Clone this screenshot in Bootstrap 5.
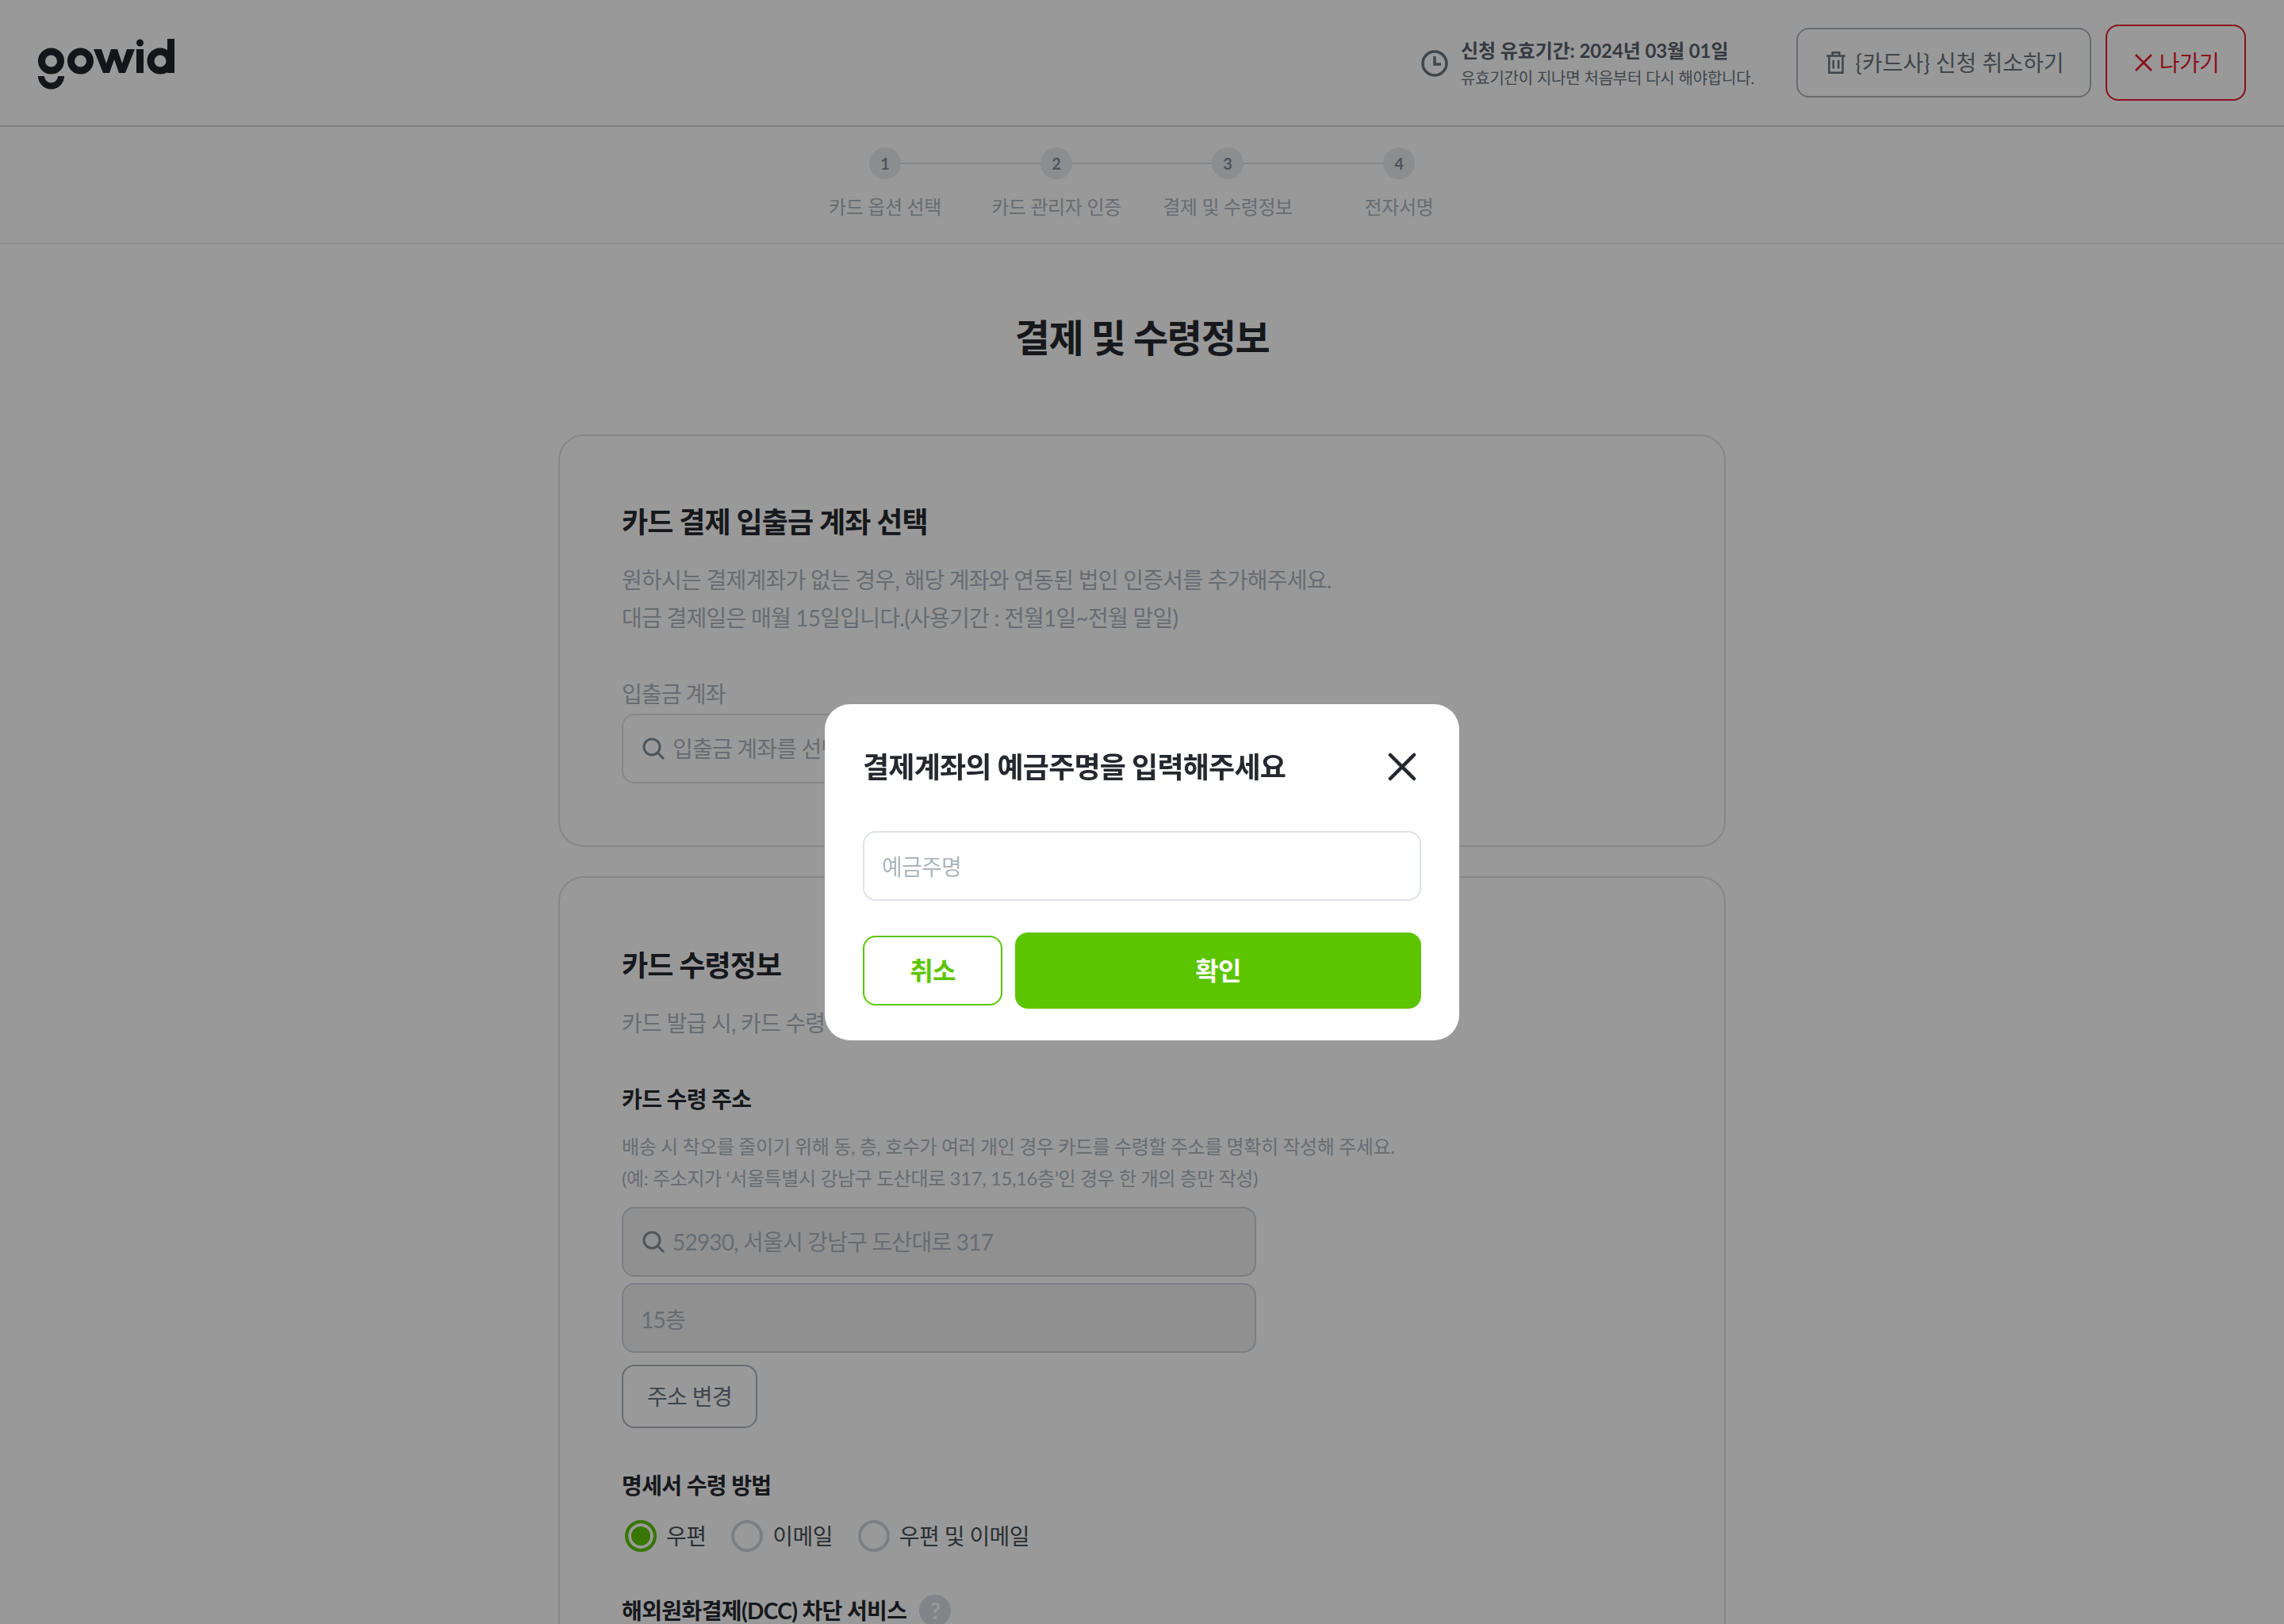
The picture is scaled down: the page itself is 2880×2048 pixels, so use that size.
<!DOCTYPE html>
<html lang="ko">
<head>
    <meta charset="UTF-8">
    <meta name="viewport" content="width=device-width, initial-scale=1.0">
    <title>결제 및 수령정보</title>
    <link href="https://cdn.jsdelivr.net/npm/bootstrap@5.3.1/dist/css/bootstrap.min.css" rel="stylesheet">
    <style>
        html, body { height: 2048px; overflow: hidden; }
        body { font-family: Lato, "Noto Sans CJK KR", sans-serif; color: #25282e; background: #fff; }

        .top-bar { height: 160px; border-bottom: 2px solid #ced4da; padding: 0 48px; }
        .gowid-logo { width: 172px; height: 64px; color: #212329; margin-top: 3px; }
        .expire-box { margin-right: 53px; padding-top: 2px; }
        .expire-box svg { width: 36px; height: 36px; color: #6c757d; margin-right: 15px; }
        .expire-title { font-size: 24px; line-height: 32px; font-weight: 700; color: #5b626a; letter-spacing: -.1px; }
        .expire-sub { font-size: 20px; line-height: 30px; color: #6c757d; letter-spacing: -.2px; margin-top: 3px; }
        .btn-line { height: 88px; width: 372px; border: 2px solid #adb5bd; border-radius: 16px; font-size: 28px; color: #6c757d; background: #fff0; letter-spacing: 0; }
        .btn-line svg { width: 32px; height: 32px; margin-right: 8px; }
        .btn-exit { height: 96px; width: 177px; margin-left: 18px; border: 2px solid #e6192f; border-radius: 16px; font-size: 28px; color: #e6192f; letter-spacing: -.6px; }
        .btn-exit svg { width: 28px; height: 28px; margin-right: 6px; }

        .step-bar { height: 148px; padding-top: 26px; border-bottom: 2px solid #e9ecef; }
        .step-item { width: 216px; position: relative; }
        .step-item:not(:last-child)::before { content: ""; position: absolute; left: 108px; top: 19px; width: 216px; height: 2px; background: #e1e3e5; }
        .step-num { width: 40px; height: 40px; position: relative; font-size: 20px; font-weight: 700; background: #e9ecef; color: #868e96; border-radius: 50%; }
        .step-label { font-size: 24px; line-height: 36px; margin-top: 17px; color: #adb5bd; letter-spacing: -.35px; white-space: nowrap; }

        .page-title { font-size: 48px; line-height: 64px; font-weight: 700; margin: 86px 0 90px; letter-spacing: -1.3px; }
        .form-box { width: 1472px; border: 2px solid #dee2e6; border-radius: 32px; padding: 78px; margin: 0 auto 37px; }
        .form-box-next { padding-top: 80px; }
        .box-title { font-size: 36px; line-height: 60px; font-weight: 700; letter-spacing: -.9px; }
        .box-desc { font-size: 28px; line-height: 48px; color: #adb5bd; margin-top: 19px; letter-spacing: -.75px; }
        .field-label { font-size: 28px; line-height: 40px; color: #adb5bd; margin-top: 52px; margin-bottom: 5px; letter-spacing: -.9px; }
        .sub-title { font-size: 28px; line-height: 40px; font-weight: 700; margin-top: 52px; letter-spacing: -.6px; }
        .sub-desc { font-size: 24px; line-height: 40px; color: #adb5bd; margin-top: 20px; letter-spacing: -.4px; }
        .search-field { width: 800px; height: 88px; border: 2px solid #dee2e6; border-radius: 16px; padding: 0 22px; font-size: 28px; color: #adb5bd; letter-spacing: -.8px; }
        .search-field svg { width: 32px; height: 32px; margin-right: 8px; flex: none; }
        .is-readonly { background: #f0f0f0; border-color: #ced4da; }
        .plain-field { padding: 4px 22px 0; }
        .btn-change { width: 171px; height: 80px; border: 2px solid #adb5bd; border-radius: 16px; font-size: 28px; color: #6c757d; margin-top: 15px; letter-spacing: -.6px; }
        .radio-row { margin-top: 24px; font-size: 28px; color: #495057; height: 40px; letter-spacing: -.6px; }
        .radio-dot { width: 40px; height: 40px; border: 4px solid #ced4da; border-radius: 50%; background: #fff; display: block; }
        .radio-dot.on { border-color: #5cc500; background: #5cc500; box-shadow: inset 0 0 0 4px #fff; }
        .radio-text { margin-left: 12px; }
        .radio-gap { margin-left: 32px; }
        .dcc-title { margin-top: 54px; }
        .help-dot { width: 40px; height: 40px; border-radius: 50%; background: #d8dde3; color: #fff; font-size: 28px; font-weight: 700; }

        .modal-backdrop.show { opacity: .4; }
        .pay-dialog { max-width: 800px; margin: 888px auto 0; }
        .pay-dialog .modal-content { height: 424px; padding: 55px 48px 40px; border: 0; border-radius: 32px; }
        .pay-title { font-size: 36px; line-height: 48px; font-weight: 700; margin: 0; letter-spacing: -.8px; }
        .pay-close { width: 48px; height: 48px; padding: 0; border: 0; background: none; color: #25282e; }
        .pay-input { height: 88px; margin-top: 57px; padding: 2px 22px 0; border: 2px solid #dee2e6; border-radius: 16px; font-size: 28px; letter-spacing: -.8px; }
        .pay-input::placeholder { color: #adb5bd; }
        .btn-cancel { width: 176px; height: 88px; border: 2px solid #5cc500; border-radius: 16px; background: #fff; color: #5cc500; font-size: 32px; font-weight: 700; letter-spacing: -.8px; }
        .btn-ok { height: 96px; border: 0; border-radius: 16px; background: #5cc500; color: #fff; font-size: 32px; font-weight: 700; letter-spacing: -.8px; }
        .btn-ok:hover { background: #5cc500; color: #fff; }
    </style>
</head>
<body>
    <header class="top-bar d-flex align-items-center">
        <svg class="gowid-logo" viewBox="0 0 172 64" role="img" aria-label="gowid">
            <g fill="none" stroke="currentColor" stroke-width="9">
                <circle cx="16.5" cy="28" r="12"/>
                <circle cx="53.5" cy="28" r="12"/>
                <circle cx="154" cy="28" r="12"/>
            </g>
            <g fill="currentColor">
                <path d="M0 47h8a8.500 8.500 0 0 0 17 0h8a16.500 16.500 0 0 1-33 0z"/>
                <polygon points="70,13 80,13 86,31 92,13 100,13 106,31 112,13 122,13 110,43 102,43 96,26 90,43 82,43"/>
                <circle cx="128.500" cy="5" r="4.500"/>
                <rect x="124" y="13" width="9" height="30"/>
                <rect x="163" y="0" width="9" height="43"/>
            </g>
        </svg>
        <div class="expire-box d-flex align-items-center ms-auto">
            <svg viewBox="0 0 36 36" fill="none" stroke="currentColor" stroke-width="3.500"><circle cx="18" cy="18" r="15"/><path d="M18 9v10h8"/></svg>
            <div>
                <div class="expire-title">신청 유효기간: 2024년 03월 01일</div>
                <div class="expire-sub">유효기간이 지나면 처음부터 다시 해야합니다.</div>
            </div>
        </div>
        <button type="button" class="btn btn-line d-flex align-items-center justify-content-center p-0">
            <svg viewBox="0 0 30 30" fill="none" stroke="currentColor" stroke-width="2.400"><path d="M4 7h22M11 7V3h8v4M7 7v20h16V7M12 12v10M18 12v10"/></svg>
            <span>{카드사} 신청 취소하기</span>
        </button>
        <button type="button" class="btn btn-exit d-flex align-items-center justify-content-center p-0">
            <svg viewBox="0 0 28 28" fill="none" stroke="currentColor" stroke-width="2.600"><path d="M4 4l20 20M24 4L4 24"/></svg>
            <span>나가기</span>
        </button>
    </header>

    <nav class="step-bar d-flex justify-content-center">
        <div class="step-item d-flex flex-column align-items-center">
            <span class="step-num d-flex align-items-center justify-content-center">1</span>
            <span class="step-label">카드 옵션 선택</span>
        </div>
        <div class="step-item d-flex flex-column align-items-center">
            <span class="step-num d-flex align-items-center justify-content-center">2</span>
            <span class="step-label">카드 관리자 인증</span>
        </div>
        <div class="step-item d-flex flex-column align-items-center">
            <span class="step-num d-flex align-items-center justify-content-center">3</span>
            <span class="step-label">결제 및 수령정보</span>
        </div>
        <div class="step-item d-flex flex-column align-items-center">
            <span class="step-num d-flex align-items-center justify-content-center">4</span>
            <span class="step-label">전자서명</span>
        </div>
    </nav>

    <main>
        <h1 class="page-title text-center">결제 및 수령정보</h1>

        <section class="form-box">
            <div class="box-title">카드 결제 입출금 계좌 선택</div>
            <div class="box-desc">원하시는 결제계좌가 없는 경우, 해당 계좌와 연동된 법인 인증서를 추가해주세요.<br>대금 결제일은 매월 15일입니다.(사용기간 : 전월1일~전월 말일)</div>
            <div class="field-label">입출금 계좌</div>
            <div class="search-field d-flex align-items-center">
                <svg viewBox="0 0 32 32" fill="none" stroke="#868e96" stroke-width="3"><circle cx="14" cy="14" r="10"/><path d="M21 21l8 8"/></svg>
                <span>입출금 계좌를 선택해주세요</span>
            </div>
        </section>

        <section class="form-box form-box-next">
            <div class="box-title">카드 수령정보</div>
            <div class="box-desc">카드 발급 시, 카드 수령 주소로 배송됩니다.</div>
            <div class="sub-title">카드 수령 주소</div>
            <div class="sub-desc mb-3">배송 시 착오를 줄이기 위해 동, 층, 호수가 여러 개인 경우 카드를 수령할 주소를 명확히 작성해 주세요.<br>(예: 주소지가 ‘서울특별시 강남구 도산대로 317, 15,16층’인 경우 한 개의 층만 작성)</div>
            <div class="search-field is-readonly d-flex align-items-center">
                <svg viewBox="0 0 32 32" fill="none" stroke="#868e96" stroke-width="3"><circle cx="14" cy="14" r="10"/><path d="M21 21l8 8"/></svg>
                <span>52930, 서울시 강남구 도산대로 317</span>
            </div>
            <div class="search-field is-readonly plain-field d-flex align-items-center mt-2">15층</div>
            <button type="button" class="btn btn-change d-block p-0">주소 변경</button>
            <div class="sub-title">명세서 수령 방법</div>
            <div class="radio-row d-flex align-items-center">
                <span class="radio-dot on ms-1"></span><span class="radio-text">우편</span>
                <span class="radio-dot radio-gap"></span><span class="radio-text">이메일</span>
                <span class="radio-dot radio-gap"></span><span class="radio-text">우편 및 이메일</span>
            </div>
            <div class="sub-title dcc-title d-flex align-items-center gap-3">
                <span>해외원화결제(DCC) 차단 서비스</span>
                <span class="help-dot d-flex align-items-center justify-content-center">?</span>
            </div>
        </section>
    </main>

    <div class="modal-backdrop show"></div>
    <div class="modal d-block" tabindex="-1">
        <div class="modal-dialog pay-dialog">
            <div class="modal-content">
                <div class="d-flex align-items-center justify-content-between">
                    <h2 class="pay-title">결제계좌의 예금주명을 입력해주세요</h2>
                    <button type="button" class="pay-close" aria-label="닫기">
                        <svg viewBox="0 0 48 48" width="48" height="48" fill="none" stroke="currentColor" stroke-width="4.500" stroke-linecap="round"><path d="M9 9l30 30M39 9L9 39"/></svg>
                    </button>
                </div>
                <input type="text" class="form-control pay-input" placeholder="예금주명">
                <div class="d-flex align-items-center gap-3 mt-auto">
                    <button type="button" class="btn btn-cancel p-0">취소</button>
                    <button type="button" class="btn btn-ok flex-grow-1 p-0">확인</button>
                </div>
            </div>
        </div>
    </div>

    <script src="https://cdn.jsdelivr.net/npm/bootstrap@5.3.1/dist/js/bootstrap.bundle.min.js"></script>
</body>
</html>
